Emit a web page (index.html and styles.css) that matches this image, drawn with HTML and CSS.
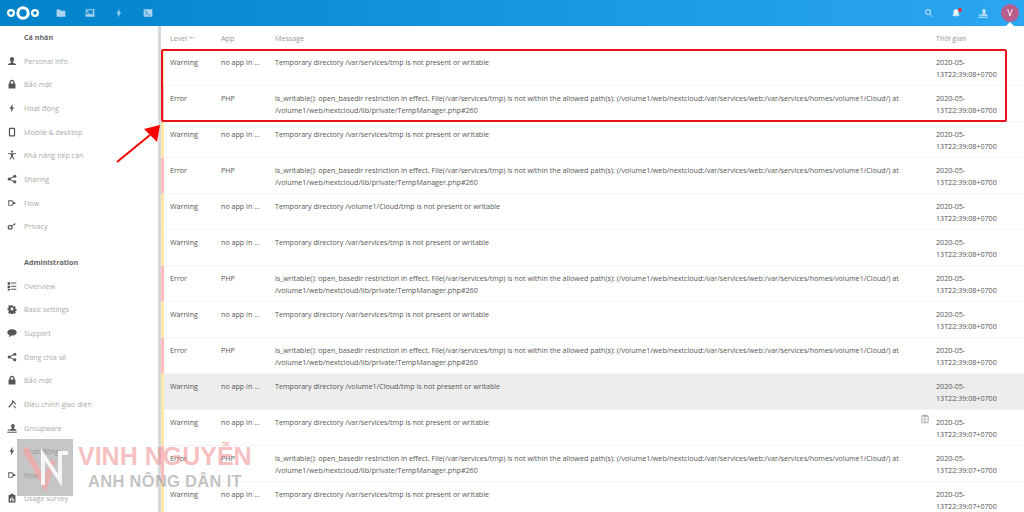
FILE: index.html
```html
<!DOCTYPE html>
<html lang="vi">
<head>
<meta charset="utf-8">
<title>Logging</title>
<link rel="stylesheet" href="styles.css">
</head>
<body>
<svg class="defs" width="0" height="0">
  <symbol id="i-user" viewBox="0 0 16 16"><path d="M8 1.500c2 0 3.200 1.500 3.200 3.500S10 9 9.500 9.600v1.200c1.500.6 5 1.200 5 3.700H1.500c0-2.500 3.500-3.100 5-3.700V9.600C6 9 4.800 7 4.800 5S6 1.500 8 1.500z"/></symbol>
  <symbol id="i-lock" viewBox="0 0 16 16"><path d="M8 1a4 4 0 0 0-4 4v2H2.500v8h11V7H12V5a4 4 0 0 0-4-4zm0 2a2 2 0 0 1 2 2v2H6V5a2 2 0 0 1 2-2z"/></symbol>
  <symbol id="i-bolt" viewBox="0 0 16 16"><path d="M9 1 4 9h3l-1 6 5.500-8H8.500z"/></symbol>
  <symbol id="i-phone" viewBox="0 0 16 16"><path d="M4.500 1h7A1.500 1.500 0 0 1 13 2.500v11a1.500 1.500 0 0 1-1.500 1.500h-7A1.500 1.500 0 0 1 3 13.500v-11A1.500 1.500 0 0 1 4.500 1zM5 3v10h6V3z"/></symbol>
  <symbol id="i-access" viewBox="0 0 16 16"><circle cx="8" cy="2.500" r="1.700"/><path d="M1.500 5h13v1.500L9.500 7v3l2.500 5h-1.500L8 11l-2.500 4H4l2.500-5V7l-5-.5z"/></symbol>
  <symbol id="i-share" viewBox="0 0 16 16"><circle cx="12.500" cy="3.500" r="2.500"/><circle cx="12.500" cy="12.500" r="2.500"/><circle cx="3.500" cy="8" r="2.500"/><path d="m3 7.200 9-4.500.8 1.400-9 4.500zm.8.200 9 4.500-.8 1.400-9-4.500z"/></symbol>
  <symbol id="i-flow" viewBox="0 0 16 16"><path d="M2 3.500h7v3H7.500V5h-4v6h4V9.500H9v3H2z"/><path d="m9 5 5.500 3L9 11z"/></symbol>
  <symbol id="i-key" viewBox="0 0 16 16"><path d="M5 6a4 4 0 1 0 0 8 4 4 0 0 0 0-8zm0 2a2 2 0 1 1 0 4 2 2 0 0 1 0-4z"/><path d="m7.500 7.500 5-4.500 1 1-1 1 1 1-1.500 1-1-1-2.500 2.500z"/></symbol>
  <symbol id="i-list" viewBox="0 0 16 16"><path d="M1 2h4v4H1zm0 5.500h4V11H1zM1 12.500h4V15H1zM6.500 2.500H15V4H6.500zm0 5H15V9H6.500zm0 5H15V14H6.500z"/></symbol>
  <symbol id="i-gear" viewBox="0 0 16 16"><path d="M6.500 1h3l.4 2 1.500.7 1.800-1 2 2.100-1.100 1.700.6 1.500 2 .5v3l-2 .4-.6 1.500 1.100 1.700-2 2-1.800-1-1.500.7-.4 2h-3l-.4-2-1.500-.7-1.800 1-2-2L2 11.400l-.6-1.500-2-.4V6.500l2-.5L2 4.500.9 2.800l2-2.100 1.800 1 1.500-.7z" transform="translate(1.200 1.200) scale(.85)"/><circle cx="8" cy="8" r="2.300" fill="#fff"/></symbol>
  <symbol id="i-chat" viewBox="0 0 16 16"><path d="M8 2c4 0 7.500 2 7.500 5S12 12 8 12l-1-.1C6 13 4.500 14 2.500 14c1-1 1.500-2 1.400-3C1.800 10 .5 8.700.5 7 .5 4 4 2 8 2z"/></symbol>
  <symbol id="i-brush" viewBox="0 0 16 16"><path d="M9 1.500 15 8l-1.200 1-3-3.500L3.500 14 2 12.500 8.500 5 7.500 3.500z"/><path d="m11 10 3.500 4-1.200 1L10 11z"/></symbol>
  <symbol id="i-group" viewBox="0 0 16 16"><path d="M9.500 1.500c1.800 0 2.800 1.300 2.800 3.200 0 1.400-.7 2.800-1.300 3.400v1c1.300.5 4.500 1 4.500 3.400H3.500c0-2.400 3.200-2.900 4.500-3.400v-1c-.6-.6-1.300-2-1.300-3.400 0-1.900 1-3.200 2.800-3.200z"/><path d="M.5 14h15v1.500H.5zM1 11c.5-.8 1.500-1.200 2.500-1.600L4 12H1z"/></symbol>
  <symbol id="i-survey" viewBox="0 0 16 16"><path d="M5.500 1h5v2h3v12h-11V3h3zM5 8v5h1.500V8zm2.500-2v7H9V6zm2.500 3v4h1.500V9z"/></symbol>
</svg>

<header class="topbar">
  <div class="topbar-left">
    <svg class="logo" width="34" height="16" viewBox="0 0 34 16"><g fill="none" stroke="#fff"><circle cx="17" cy="8" r="5.200" stroke-width="3"/><circle cx="5" cy="8" r="2.900" stroke-width="2.200"/><circle cx="29" cy="8" r="2.900" stroke-width="2.200"/></g></svg>
    <nav class="apps">
      <svg class="app" viewBox="0 0 16 16"><path d="M1 2.500h5.500L8 4.500h7v9.500H1z"/></svg>
      <svg class="app" viewBox="0 0 16 16"><path fill-rule="evenodd" d="M1 2h14v12H1zm1.500 1.500V11l3-3 2.500 2.500 2-2 2.500 2.500V3.500zM4.500 4.500a1.300 1.300 0 1 1 0 2.600 1.300 1.300 0 0 1 0-2.600z"/></svg>
      <svg class="app" viewBox="0 0 16 16"><use href="#i-bolt"/></svg>
      <svg class="app" viewBox="0 0 16 16"><path fill-rule="evenodd" d="M1 2h14v12H1zm2 3 3 2.500L3 10v1.500L7.500 7.500 3 3.500zm4.500 5.500v1.200H12v-1.200z"/></svg>
    </nav>
  </div>
  <div class="topbar-right">
    <svg class="tool" viewBox="0 0 16 16"><circle cx="6.500" cy="6.500" r="4" fill="none" stroke="#b5dcf7" stroke-width="1.800"/><path d="m9.500 10.500 1-1 4 4-1 1z" fill="#b5dcf7"/></svg>
    <span class="bell"><svg class="tool" viewBox="0 0 16 16"><path d="M8 2c3 0 4 2 4 5v3l2 2.500H2L4 10V7c0-3 1-5 4-5zM6.500 13.500h3L8 15z" fill="#e6f4fd"/></svg><i class="bell-dot"></i></span>
    <svg class="tool" viewBox="0 0 16 16"><use href="#i-group" fill="#c4e3f9"/></svg>
    <span class="avatar">V</span>
  </div>
</header>

<div class="layout">
  <aside class="sidebar">
    <h2 class="side-title">Cá nhân</h2>
    <ul class="side-list">
      <li><svg><use href="#i-user"/></svg>Personal info</li>
      <li><svg><use href="#i-lock"/></svg>Bảo mật</li>
      <li><svg><use href="#i-bolt"/></svg>Hoạt động</li>
      <li><svg><use href="#i-phone"/></svg>Mobile &amp; desktop</li>
      <li><svg><use href="#i-access"/></svg>Khả năng tiếp cận</li>
      <li><svg><use href="#i-share"/></svg>Sharing</li>
      <li><svg><use href="#i-flow"/></svg>Flow</li>
      <li><svg><use href="#i-key"/></svg>Privacy</li>
    </ul>
    <h2 class="side-title side-title-admin">Administration</h2>
    <ul class="side-list">
      <li><svg><use href="#i-list"/></svg>Overview</li>
      <li><svg><use href="#i-gear"/></svg>Basic settings</li>
      <li><svg><use href="#i-chat"/></svg>Support</li>
      <li><svg><use href="#i-share"/></svg>Đang chia sẻ</li>
      <li><svg><use href="#i-lock"/></svg>Bảo mật</li>
      <li><svg><use href="#i-brush"/></svg>Điều chỉnh giao diện</li>
      <li><svg><use href="#i-group"/></svg>Groupware</li>
      <li><svg><use href="#i-bolt"/></svg>Hoạt động</li>
      <li><svg><use href="#i-flow"/></svg>Flow</li>
      <li><svg><use href="#i-survey"/></svg>Usage survey</li>
    </ul>
  </aside>

  <main class="logs">
    <div class="row head">
      <div class="c-level">Level <span class="dots">•••</span></div>
      <div class="c-app">App</div>
      <div class="c-msg">Message</div>
      <div class="c-time">Thời gian</div>
    </div>
    <div class="row warn"><div class="c-level">Warning</div><div class="c-app">no app in ...</div><div class="c-msg">Temporary directory /var/services/tmp is not present or writable</div><div class="c-time">2020-05-13T22:39:08+0700</div></div>
    <div class="row err"><div class="c-level">Error</div><div class="c-app">PHP</div><div class="c-msg">is_writable(): open_basedir restriction in effect. File(/var/services/tmp) is not within the allowed path(s): (/volume1/web/nextcloud:/var/services/web:/var/services/homes/volume1/Cloud/) at /volume1/web/nextcloud/lib/private/TempManager.php#260</div><div class="c-time">2020-05-13T22:39:08+0700</div></div>
    <div class="row warn"><div class="c-level">Warning</div><div class="c-app">no app in ...</div><div class="c-msg">Temporary directory /var/services/tmp is not present or writable</div><div class="c-time">2020-05-13T22:39:08+0700</div></div>
    <div class="row err"><div class="c-level">Error</div><div class="c-app">PHP</div><div class="c-msg">is_writable(): open_basedir restriction in effect. File(/var/services/tmp) is not within the allowed path(s): (/volume1/web/nextcloud:/var/services/web:/var/services/homes/volume1/Cloud/) at /volume1/web/nextcloud/lib/private/TempManager.php#260</div><div class="c-time">2020-05-13T22:39:08+0700</div></div>
    <div class="row warn"><div class="c-level">Warning</div><div class="c-app">no app in ...</div><div class="c-msg">Temporary directory /volume1/Cloud/tmp is not present or writable</div><div class="c-time">2020-05-13T22:39:08+0700</div></div>
    <div class="row warn"><div class="c-level">Warning</div><div class="c-app">no app in ...</div><div class="c-msg">Temporary directory /var/services/tmp is not present or writable</div><div class="c-time">2020-05-13T22:39:08+0700</div></div>
    <div class="row err"><div class="c-level">Error</div><div class="c-app">PHP</div><div class="c-msg">is_writable(): open_basedir restriction in effect. File(/var/services/tmp) is not within the allowed path(s): (/volume1/web/nextcloud:/var/services/web:/var/services/homes/volume1/Cloud/) at /volume1/web/nextcloud/lib/private/TempManager.php#260</div><div class="c-time">2020-05-13T22:39:08+0700</div></div>
    <div class="row warn"><div class="c-level">Warning</div><div class="c-app">no app in ...</div><div class="c-msg">Temporary directory /var/services/tmp is not present or writable</div><div class="c-time">2020-05-13T22:39:08+0700</div></div>
    <div class="row err"><div class="c-level">Error</div><div class="c-app">PHP</div><div class="c-msg">is_writable(): open_basedir restriction in effect. File(/var/services/tmp) is not within the allowed path(s): (/volume1/web/nextcloud:/var/services/web:/var/services/homes/volume1/Cloud/) at /volume1/web/nextcloud/lib/private/TempManager.php#260</div><div class="c-time">2020-05-13T22:39:08+0700</div></div>
    <div class="row warn hover"><div class="c-level">Warning</div><div class="c-app">no app in ...</div><div class="c-msg">Temporary directory /volume1/Cloud/tmp is not present or writable</div><div class="c-time">2020-05-13T22:39:08+0700</div></div>
    <div class="row warn"><div class="c-level">Warning</div><div class="c-app">no app in ...</div><div class="c-msg">Temporary directory /var/services/tmp is not present or writable</div><svg class="copy" viewBox="0 0 16 16"><path fill="none" stroke="#999" stroke-width="1.300" d="M3 3h10v11H3zM6 2h4v2.500H6zM5.500 8h5M5.500 11h5"/></svg><div class="c-time">2020-05-13T22:39:07+0700</div></div>
    <div class="row err"><div class="c-level">Error</div><div class="c-app">PHP</div><div class="c-msg">is_writable(): open_basedir restriction in effect. File(/var/services/tmp) is not within the allowed path(s): (/volume1/web/nextcloud:/var/services/web:/var/services/homes/volume1/Cloud/) at /volume1/web/nextcloud/lib/private/TempManager.php#260</div><div class="c-time">2020-05-13T22:39:07+0700</div></div>
    <div class="row warn"><div class="c-level">Warning</div><div class="c-app">no app in ...</div><div class="c-msg">Temporary directory /var/services/tmp is not present or writable</div><div class="c-time">2020-05-13T22:39:07+0700</div></div>
  </main>
</div>

<div class="callout"></div>
<svg class="arrow" width="60" height="50" viewBox="0 0 60 50"><path d="M2 49 35 22" stroke="#f00" stroke-width="2" fill="none"/><path d="M45 12 29 16 42 29z" fill="#f00"/></svg>

<div class="watermark">
  <div class="wm-square"><svg width="56" height="57" viewBox="0 0 56 57"><path d="M8 9 28 46 36 21" fill="none" stroke="#f3a7a7" stroke-width="6" opacity=".75"/><path d="M26 46V16L43 41V14h8" fill="none" stroke="#f6f6f6" stroke-width="4"/></svg></div>
  <div class="wm-text">
    <div class="wm-name">VINH NGUYỄN</div>
    <div class="wm-sub">ANH NÔNG DÂN IT</div>
  </div>
</div>
</body>
</html>
```
FILE: styles.css
```css
* { box-sizing: border-box; }
html, body { margin: 0; padding: 0; }
body {
  width: 1024px;
  height: 512px;
  overflow: hidden;
  position: relative;
  background: #fff;
  font-family: "Open Sans", "Noto Sans", sans-serif;
  font-size: 7.15px;
  line-height: 12px;
  color: #555;
}
.defs { position: absolute; }

.topbar {
  height: 26px;
  display: flex;
  justify-content: space-between;
  align-items: center;
  background: linear-gradient(90deg, #0082c9 0%, #1796e0 50%, #2ba6f0 100%);
}
.topbar-left { display: flex; align-items: center; padding-left: 6px; }
.logo { display: block; }
.apps { display: flex; gap: 19px; margin-left: 16px; }
.app { width: 10px; height: 10px; fill: #a9d4ef; display: block; }
.topbar-right { display: flex; align-items: center; gap: 17px; padding-right: 5px; position: relative; }
.tool { width: 10px; height: 10px; display: block; }
.bell { position: relative; display: block; }
.bell-dot { position: absolute; top: 0; right: -1px; width: 4px; height: 4px; border-radius: 50%; background: #e9322d; }
.avatar {
  width: 18px;
  height: 18px;
  margin-left: -4px;
  border-radius: 50%;
  background: #b85c8c;
  color: #fff;
  font-size: 9px;
  line-height: 18px;
  text-align: center;
  position: relative;
}
.avatar::after {
  content: "";
  position: absolute;
  left: 5px;
  top: 18px;
  border: 4px solid transparent;
  border-top: 0;
  border-bottom-color: #fff;
}

.layout { display: flex; height: 486px; }
.sidebar {
  width: 161px;
  flex: none;
  border-right: 3px solid #d9d9d9;
  padding-top: 5px;
  color: #aaa;
}
.side-title {
  margin: 0;
  padding-left: 24px;
  height: 12px;
  font-size: 7.15px;
  font-weight: 700;
  line-height: 12px;
  color: #666;
}
.side-title-admin { margin-top: 17.5px; }
.side-list { list-style: none; margin: 0; padding: 6px 0 0; }
.side-list li {
  height: 23.67px;
  display: flex;
  align-items: center;
  gap: 7px;
  padding-left: 7px;
  white-space: nowrap;
}
.side-list svg { width: 10px; height: 10px; fill: #555; flex: none; }

.logs { flex: 1; min-width: 0; }
.row {
  display: flex;
  height: 36px;
  padding-top: 6px;
  border-left: 3px solid transparent;
  border-bottom: 1px solid #f4f4f4;
  position: relative;
}
.row.head { height: 24px; border-bottom: 0; color: #999; padding-top: 5.5px; }
.row.warn { border-left-color: #fde9a8; }
.row.err { border-left-color: #fcbcbc; }
.row.hover { background: #ededed; }
.c-level { width: 57px; padding-left: 6px; flex: none; }
.c-app { width: 54px; flex: none; white-space: nowrap; }
.c-msg { width: 631px; flex: none; }
.c-time { width: 80px; margin-left: 30px; flex: none; }
.dots { font-size: 5px; vertical-align: 1px; }
.copy { position: absolute; left: 756px; top: 4px; width: 10px; height: 10px; }

.callout {
  position: absolute;
  left: 161px;
  top: 49px;
  width: 846px;
  height: 73px;
  border: 2px solid #e8131b;
  border-radius: 2px;
}
.arrow { position: absolute; left: 115px; top: 113px; }

.watermark { position: absolute; left: 17px; top: 439px; display: flex; pointer-events: none; }
.wm-square { width: 56px; height: 57px; background: rgba(120,120,120,.42); }
.wm-square svg { display: block; }
.wm-text { margin-left: 5px; padding-top: 3px; font-family: "Liberation Sans", sans-serif; font-weight: 700; white-space: nowrap; }
.wm-name { font-size: 25px; line-height: 28px; color: rgba(238,130,130,.5); }
.wm-sub { font-size: 16.5px; line-height: 22px; margin-left: 10px; color: rgba(120,120,120,.45); letter-spacing: .3px; }
```
